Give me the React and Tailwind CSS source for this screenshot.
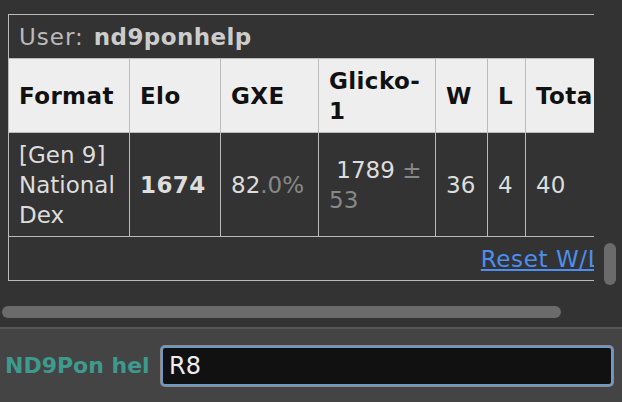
import React from 'react';

const font = { fontFamily: '"DejaVu Sans", Verdana, sans-serif' };

const cell = 'text-left align-middle px-[10px] pt-[7px] pb-[6px] border border-[#bbb]';

export default function App() {
    return (
        <div className="w-[622px] h-[402px] bg-[#333] overflow-hidden flex flex-col" style={font}>
            {/* Ladder panel */}
            <div className="flex h-[327px]">
                <div className="w-[596px] flex flex-col">
                    <div className="w-[594px] overflow-hidden pl-[8px] pt-[14px]">
                        <table className="w-[603px] table-fixed border-collapse border border-[#bbb] text-[23px] leading-[30px] text-[#ddd]">
                            <colgroup>
                                <col className="w-[121px]" />
                                <col className="w-[91px]" />
                                <col className="w-[98px]" />
                                <col className="w-[117px]" />
                                <col className="w-[52px]" />
                                <col className="w-[38px]" />
                                <col className="w-[86px]" />
                            </colgroup>
                            <thead>
                                <tr>
                                    <th colSpan={7} className="text-left font-normal px-[10px] pt-[7px] pb-[6px] text-[#bbb] whitespace-nowrap">
                                        <span className="tracking-[1px]">User:</span>
                                        <strong className="ml-[10px] text-[#ccc] tracking-[0.4px]">nd9ponhelp</strong>
                                    </th>
                                </tr>
                                <tr className="bg-[#eee] text-[#111] tracking-[0.4px]">
                                    <th className={cell}>Format</th>
                                    <th className={cell}>Elo</th>
                                    <th className={cell}>GXE</th>
                                    <th className={cell}>Glicko-1</th>
                                    <th className={cell}>W</th>
                                    <th className={cell}>L</th>
                                    <th className={cell + ' whitespace-nowrap'}>Total</th>
                                </tr>
                            </thead>
                            <tbody>
                                <tr>
                                    <td className={cell}>[Gen 9] National Dex</td>
                                    <td className={cell + ' font-bold tracking-[0.4px]'}>1674</td>
                                    <td className={cell}>
                                        82<span className="text-[#888]">.0%</span>
                                    </td>
                                    <td className={cell}>
                                        &nbsp;1789 <span className="text-[#888]">± 53</span>
                                    </td>
                                    <td className={cell}>36</td>
                                    <td className={cell}>4</td>
                                    <td className={cell}>40</td>
                                </tr>
                                <tr>
                                    <td colSpan={7} className="text-right px-[10px] pt-[7px] pb-[6px] border border-[#bbb] whitespace-nowrap">
                                        <a href="#" className="text-[#4d8ef0] underline tracking-[0.6px]">Reset W/L</a>
                                    </td>
                                </tr>
                            </tbody>
                        </table>
                    </div>
                    {/* horizontal scroll thumb */}
                    <div className="mt-[25px] ml-[2px] w-[559px] h-[12px] rounded-full bg-[#6b6b6b]" />
                </div>
                {/* vertical scroll thumb */}
                <div className="flex-1">
                    <div className="mt-[243px] ml-[8px] w-[12px] h-[42px] rounded-full bg-[#6b6b6b]" />
                </div>
            </div>

            {/* Chat input bar */}
            <div className="flex-1 bg-[#444] border-t-2 border-[#555] flex items-center">
                <div className="w-[161px] pl-[5px] overflow-hidden whitespace-nowrap text-[22px] font-bold text-[#3f9a8e]">
                    ND9Pon hel
                </div>
                <input
                    readOnly
                    value="R8"
                    className="w-[452px] h-[40px] bg-[#111] text-[#eee] text-[24px] pl-[6px] rounded-[4px] border-2 border-[#6f98c4] shadow-[0_0_0_1px_#8a8a8a] outline-none"
                    style={font}
                />
            </div>
        </div>
    );
}
